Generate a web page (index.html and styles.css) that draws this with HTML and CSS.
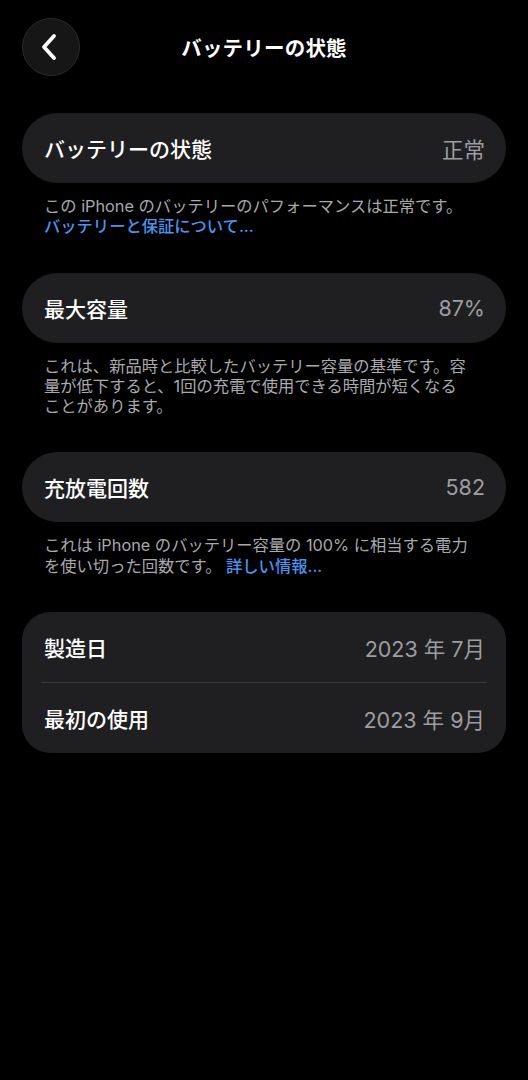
FILE: index.html
```html
<!DOCTYPE html>
<html lang="ja">
<head>
<meta charset="UTF-8">
<meta name="viewport" content="width=device-width, initial-scale=1.0">
<title>バッテリーの状態</title>
<link rel="stylesheet" href="styles.css">
</head>
<body>

<div class="screen">

 <div class="nav-bar">
  <button class="back-button">
   <svg width="20" height="28" viewBox="0 0 20 28">
    <path d="M14 3 L4 14 L14 25" fill="none" stroke="#fff" stroke-width="3.8" stroke-linecap="round" stroke-linejoin="round"/>
   </svg>
  </button>
  <div class="nav-title">バッテリーの状態</div>
 </div>

 <div class="sections">

  <div class="section">
   <div class="card">
    <div class="row">
     <span class="label">バッテリーの状態</span>
     <span class="value">正常</span>
    </div>
   </div>
   <div class="footnote">
    この iPhone のバッテリーのパフォーマンスは正常です。<br>
    <a class="link" href="#">バッテリーと保証について...</a>
   </div>
  </div>

  <div class="section">
   <div class="card">
    <div class="row">
     <span class="label">最大容量</span>
     <span class="value">87%</span>
    </div>
   </div>
   <div class="footnote">
    これは、新品時と比較したバッテリー容量の基準です。容<br>
    量が低下すると、1回の充電で使用できる時間が短くなる<br>
    ことがあります。
   </div>
  </div>

  <div class="section">
   <div class="card">
    <div class="row">
     <span class="label">充放電回数</span>
     <span class="value">582</span>
    </div>
   </div>
   <div class="footnote">
    これは iPhone のバッテリー容量の 100% に相当する電力<br>
    を使い切った回数です。 <a class="link" href="#">詳しい情報...</a>
   </div>
  </div>

  <div class="section">
   <div class="card card-group">
    <div class="row">
     <span class="label">製造日</span>
     <span class="value">2023 年 7月</span>
    </div>
    <div class="divider"></div>
    <div class="row">
     <span class="label">最初の使用</span>
     <span class="value">2023 年 9月</span>
    </div>
   </div>
  </div>

 </div>

</div>

</body>
</html>
```

FILE: styles.css
```css
body, html {
 margin: 0;
 background-color: #000;
 font-family: Inter, "Noto Sans CJK JP", sans-serif;
 color: #fff;
}
.screen {
 width: 528px;
 min-height: 1080px;
 padding: 0 22px;
 box-sizing: border-box;
}
.nav-bar {
 height: 95px;
 display: flex;
 align-items: center;
 position: relative;
 padding-bottom: 2px;
 box-sizing: border-box;
}
.back-button {
 width: 58px;
 height: 58px;
 border-radius: 50%;
 background-color: #161617;
 border: 1px solid #2a2a2c;
 display: flex;
 align-items: center;
 justify-content: center;
 padding: 0 3px 0 0;
 z-index: 1;
}
.nav-title {
 position: absolute;
 left: 0;
 right: 0;
 text-align: center;
 font-size: 20.5px;
 font-weight: 700;
 letter-spacing: 0.2px;
}
.sections {
 display: flex;
 flex-direction: column;
 gap: 36px;
 padding-top: 18px;
}
.card {
 background-color: #1f1f21;
 border-radius: 35px;
}
.card-group {
 border-radius: 28px;
}
.row {
 height: 70px;
 display: flex;
 align-items: center;
 justify-content: space-between;
 padding: 0 21px 0 22px;
}
.label {
 font-size: 21px;
 font-weight: 500;
}
.value {
 font-size: 21.5px;
 color: #9d9da2;
}
.divider {
 height: 1px;
 background-color: #3a3a3c;
 margin: 0 20px;
}
.footnote {
 padding: 13px 22px 0 22px;
 font-size: 16.3px;
 line-height: 20.3px;
 color: #a9a9ae;
}
.link {
 color: #4c93ee;
 text-decoration: none;
 font-weight: 500;
}
```
